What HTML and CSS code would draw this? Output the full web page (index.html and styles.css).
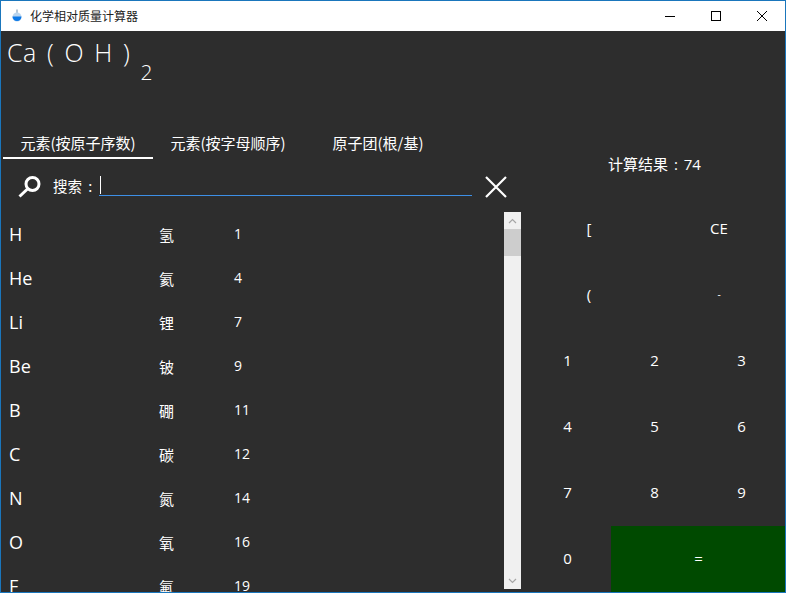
FILE: index.html
```html
<!DOCTYPE html>
<html lang="zh">
<head>
<meta charset="utf-8">
<title>化学相对质量计算器</title>
<link rel="stylesheet" href="styles.css">
</head>
<body>
<div class="window">
  <header class="titlebar">
    <svg class="app-icon" width="16" height="16" viewBox="0 0 16 16"><path d="M7 1.5h2v4h-2z" fill="#b4c6d6"/><circle cx="8" cy="9" r="4.5" fill="#b8d4ee"/><path d="M3.5 8.5h9a4.5 4.5 0 0 1-9 0z" fill="#0a78e8"/></svg>
    <span class="title">化学相对质量计算器</span>
    <div class="controls">
      <span class="ctl"><svg width="12" height="12" viewBox="0 0 12 12"><path d="M1 6.5h10" stroke="#000"/></svg></span>
      <span class="ctl"><svg width="12" height="12" viewBox="0 0 12 12"><rect x="1.5" y="1.5" width="9" height="9" fill="none" stroke="#000"/></svg></span>
      <span class="ctl"><svg width="12" height="12" viewBox="0 0 12 12"><path d="M1 1l10 10M11 1L1 11" stroke="#000"/></svg></span>
    </div>
  </header>
  <div class="formula"><span>Ca ( O H )</span><span class="sub">2</span></div>
  <div class="main">
    <section class="left">
      <nav class="tabs">
        <span class="tab active">元素(按原子序数)</span>
        <span class="tab">元素(按字母顺序)</span>
        <span class="tab">原子团(根/基)</span>
      </nav>
      <div class="search">
        <svg class="search-icon" width="26" height="24" viewBox="0 0 26 24"><circle cx="15.5" cy="9" r="6.5" fill="none" stroke="#fff" stroke-width="3"/><path d="M10.5 14L2.5 21.5" stroke="#fff" stroke-width="3"/></svg>
        <span class="search-label">搜索 :</span>
        <div class="search-input"><i class="caret"></i></div>
        <svg class="clear" width="24" height="24" viewBox="0 0 24 24"><path d="M2 2l20 20M22 2L2 22" stroke="#fff" stroke-width="2.2"/></svg>
      </div>
      <div class="list-wrap">
        <div class="list">
          <div class="row"><span class="sym">H</span><span class="name">氢</span><span class="mass">1</span></div>
          <div class="row"><span class="sym">He</span><span class="name">氦</span><span class="mass">4</span></div>
          <div class="row"><span class="sym">Li</span><span class="name">锂</span><span class="mass">7</span></div>
          <div class="row"><span class="sym">Be</span><span class="name">铍</span><span class="mass">9</span></div>
          <div class="row"><span class="sym">B</span><span class="name">硼</span><span class="mass">11</span></div>
          <div class="row"><span class="sym">C</span><span class="name">碳</span><span class="mass">12</span></div>
          <div class="row"><span class="sym">N</span><span class="name">氮</span><span class="mass">14</span></div>
          <div class="row"><span class="sym">O</span><span class="name">氧</span><span class="mass">16</span></div>
          <div class="row"><span class="sym">F</span><span class="name">氟</span><span class="mass">19</span></div>
        </div>
        <div class="scrollbar">
          <span class="sb-btn"><svg width="9" height="6" viewBox="0 0 9 6"><path d="M1 5l3.5-3.5L8 5" fill="none" stroke="#a6a6a6" stroke-width="1.2"/></svg></span>
          <span class="sb-thumb"></span>
          <span class="sb-track"></span>
          <span class="sb-btn"><svg width="9" height="6" viewBox="0 0 9 6"><path d="M1 1l3.5 3.5L8 1" fill="none" stroke="#a6a6a6" stroke-width="1.2"/></svg></span>
        </div>
      </div>
    </section>
    <section class="right">
      <div class="result">计算结果 : 74</div>
      <div class="keys-two">
        <span class="key">[</span><span class="key">CE</span>
        <span class="key">(</span><span class="key dash">-</span>
      </div>
      <div class="keys-three">
        <span class="key">1</span><span class="key">2</span><span class="key">3</span>
        <span class="key">4</span><span class="key">5</span><span class="key">6</span>
        <span class="key">7</span><span class="key">8</span><span class="key">9</span>
        <span class="key">0</span><span class="key equals">=</span>
      </div>
    </section>
  </div>
</div>
</body>
</html>
```
FILE: styles.css
```css
* { box-sizing: border-box; }
html, body { margin: 0; height: 100%; overflow: hidden; }
body { font-family: "Open Sans", "Noto Sans CJK SC", sans-serif; color: #fff; }
.window {
  width: 786px; height: 593px; border: 1px solid #1a76bc;
  background: #2d2d2d; display: flex; flex-direction: column; overflow: hidden;
}
.titlebar {
  height: 30px; flex: none; background: #fff; color: #222; display: flex; align-items: center;
  font: 12px "Noto Sans CJK SC", sans-serif; padding-left: 8px;
}
.app-icon { margin-right: 5px; }
.title { flex: 1; margin-top: -1px; }
.controls { display: flex; }
.ctl { width: 46px; height: 30px; display: flex; align-items: center; justify-content: center; margin-top: -1px; }
.formula { height: 96px; flex: none; padding: 4px 0 0 6px; font-size: 25px; line-height: 34px; font-weight: 300; letter-spacing: .6px; word-spacing: 3px; display: flex; }
.formula .sub { font-size: 21px; line-height: 28px; margin: 23px 0 0 10px; letter-spacing: 0; }
.main { flex: 1; display: flex; min-height: 0; }
.left { width: 522px; flex: none; display: flex; flex-direction: column; min-height: 0; }
.tabs { display: flex; padding-left: 2px; height: 32px; flex: none; }
.tab { width: 150px; text-align: center; font: 15px/31px "Noto Sans CJK SC", sans-serif; height: 32px; }
.tab.active { border-bottom: 2px solid #fff; }
.search { height: 53px; flex: none; display: flex; align-items: flex-start; padding: 16px 0 0 16px; }
.search-icon { flex: none; }
.search-label { margin-left: 10px; font: 14.5px/20px "Noto Sans CJK SC", sans-serif; margin-top: 1px; width: 46px; white-space: nowrap; word-spacing: 3px; }
.search-input { width: 373px; height: 21px; border-bottom: 1px solid #3d8fe6; padding-left: 1px; }
.caret { display: block; width: 1px; height: 18px; background: #fff; margin-top: 1px; }
.clear { margin-left: 12px; flex: none; }
.list-wrap { flex: 1; display: flex; min-height: 0; }
.list { flex: 1; overflow: hidden; padding-left: 8px; }
.row { height: 44px; display: flex; align-items: center; }
.sym { width: 150px; font-size: 18px; }
.name { width: 75px; font: 15px "Noto Sans CJK SC", sans-serif; }
.mass { font-size: 14px; padding-bottom: 2px; }
.scrollbar { width: 17px; flex: none; background: #f0f0f0; display: flex; flex-direction: column; margin-right: 2px; height: 377px; }
.sb-btn { height: 17px; flex: none; display: flex; align-items: center; justify-content: center; }
.sb-thumb { height: 27px; flex: none; background: #cdcdcd; }
.sb-track { flex: 1; }
.right { flex: 1; display: flex; flex-direction: column; min-width: 0; margin-left: 1px; }
.result { height: 69px; flex: none; text-align: center; font: 15px/20px "Open Sans", "Noto Sans CJK SC", sans-serif; word-spacing: 2px; padding-top: 27px; }
.keys-two { display: grid; grid-template-columns: 130px 130px; grid-auto-rows: 66px; flex: none; }
.keys-three { display: grid; grid-template-columns: 87px 87px 87px; grid-auto-rows: 66px; flex: none; }
.key { display: flex; align-items: center; justify-content: center; font-size: 15px; padding-bottom: 2px; }
.key.dash { font-size: 10px; }
.key.equals { grid-column: span 2; background: #004a00; margin-right: -1px; }
```
